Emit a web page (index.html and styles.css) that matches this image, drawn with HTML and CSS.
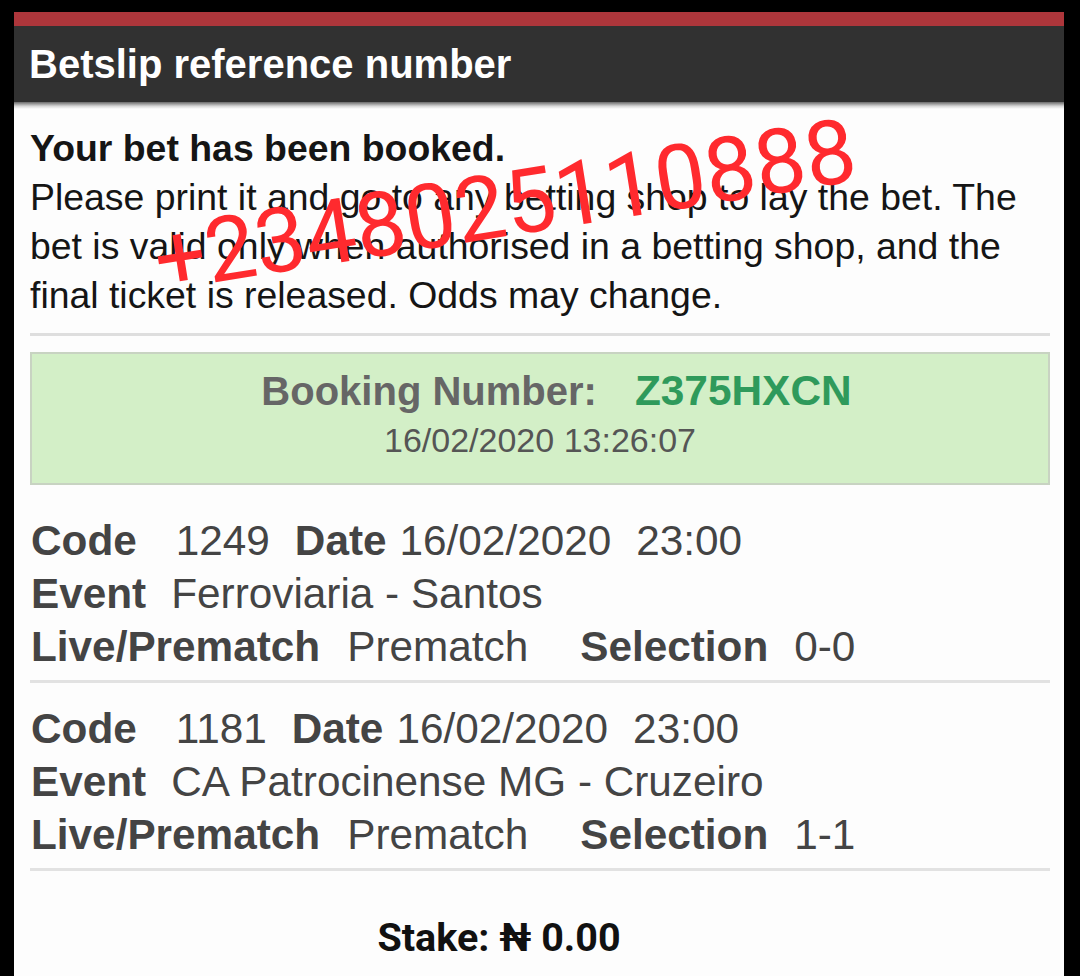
FILE: index.html
```html
<!DOCTYPE html>
<html>
<head>
<meta charset="utf-8">
<link rel="stylesheet" href="styles.css">
</head>
<body>
<div class="frame">
  <div class="redbar"></div>
  <div class="header">Betslip reference number</div>
  <div class="shade"></div>
  <div class="content">
    <div class="notice">
      <div class="notice-title">Your bet has been booked.</div>
      <div class="notice-text">Please print it and go to any betting shop to lay the bet. The bet is valid only when authorised in a betting shop, and the final ticket is released. Odds may change.</div>
    </div>
    <div class="booking">
      <div class="booking-line"><span class="booking-label">Booking Number:</span><span class="booking-code">Z375HXCN</span></div>
      <div class="booking-date">16/02/2020 13:26:07</div>
    </div>
    <div class="bet">
      <div class="bet-line"><b class="lbl code-lbl">Code</b><span class="val code-val">1249</span><b class="lbl date-lbl">Date</b><span class="val date-val">16/02/2020</span><span class="val">23:00</span></div>
      <div class="bet-line"><b class="lbl event-lbl">Event</b><span class="val">Ferroviaria - Santos</span></div>
      <div class="bet-line"><b class="lbl live-lbl">Live/Prematch</b><span class="val pre-val">Prematch</span><b class="lbl sel-lbl">Selection</b><span class="val">0-0</span></div>
    </div>
    <div class="bet">
      <div class="bet-line"><b class="lbl code-lbl">Code</b><span class="val code-val">1181</span><b class="lbl date-lbl">Date</b><span class="val date-val">16/02/2020</span><span class="val">23:00</span></div>
      <div class="bet-line"><b class="lbl event-lbl">Event</b><span class="val">CA Patrocinense MG - Cruzeiro</span></div>
      <div class="bet-line"><b class="lbl live-lbl">Live/Prematch</b><span class="val pre-val">Prematch</span><b class="lbl sel-lbl">Selection</b><span class="val">1-1</span></div>
    </div>
    <div class="stake">Stake: ₦ 0.00</div>
  </div>
</div>
<div class="watermark">+2348025110888</div>
</body>
</html>
```
FILE: styles.css
```css
html, body {
  margin: 0;
  padding: 0;
  background: #000;
}
body {
  position: relative;
  height: 976px;
  overflow: hidden;
  font-family: "Liberation Sans", Arial, sans-serif;
}
.frame {
  margin: 12px 16px 0 14px;
  background: #fdfdfd;
  height: 964px;
}
.redbar {
  height: 14px;
  background: #ad363b;
}
.header {
  height: 76px;
  line-height: 76px;
  background: #313131;
  color: #fff;
  font-weight: bold;
  font-size: 40px;
  padding-left: 15px;
}
.shade {
  height: 7px;
  background: linear-gradient(#6a6a6a, #d8d8d8 60%, #fdfdfd);
}
.content {
  padding: 0 14px 0 16px;
}
.notice {
  padding-top: 15px;
  padding-bottom: 13px;
  border-bottom: 3px solid #dedede;
  color: #151515;
  font-size: 37.4px;
  line-height: 49px;
}
.notice-title {
  font-weight: bold;
}
.booking {
  margin-top: 16px;
  background: #d3efc7;
  border: 2px solid #c8d3c2;
  padding: 13px 0 21px;
  text-align: center;
}
.booking-line {
  font-size: 40px;
  line-height: 48px;
  font-weight: bold;
  padding-left: 33px;
}
.booking-label {
  color: #666;
}
.booking-code {
  color: #2f9a5b;
  font-size: 42.4px;
  margin-left: 38px;
}
.booking-date {
  margin-top: 3px;
  font-size: 34px;
  line-height: 44px;
  color: #555;
}
.bet {
  padding: 19px 0 7px;
  border-bottom: 3px solid #e2e2e2;
  color: #444;
  font-size: 42.3px;
  line-height: 53px;
}
.booking + .bet {
  padding-top: 29px;
}
.bet-line {
  display: flex;
  white-space: nowrap;
  padding-left: 1px;
}
.lbl {
  font-weight: bold;
}
.code-lbl { margin-right: 39px; }
.code-val { margin-right: 25px; }
.date-lbl { margin-right: 13px; }
.date-val { margin-right: 25px; }
.event-lbl { margin-right: 25px; }
.live-lbl { margin-right: 27px; }
.pre-val { margin-right: 52px; }
.sel-lbl { margin-right: 26px; }
.stake {
  margin-top: 42px;
  font-family: Roboto, "DejaVu Sans", sans-serif;
  font-weight: bold;
  font-size: 39.5px;
  line-height: 50px;
  color: #111;
  text-align: center;
  padding-right: 82px;
}
.watermark {
  position: absolute;
  left: 160px;
  top: 216px;
  font-family: Roboto, sans-serif;
  font-size: 90px;
  line-height: 90px;
  color: #ff2a2e;
  transform-origin: 0 76px;
  transform: rotate(-9deg);
  white-space: nowrap;
}
```
